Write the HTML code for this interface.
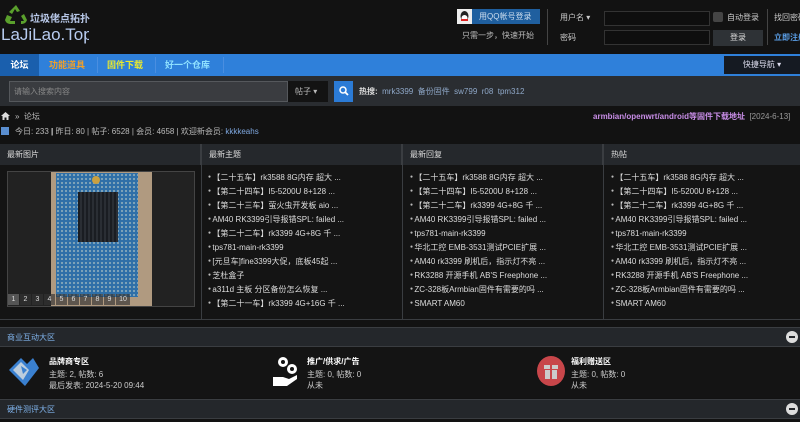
<!DOCTYPE html>
<html><head><meta charset="utf-8">
<style>
*{margin:0;padding:0;box-sizing:border-box}
body{width:800px;height:422px;overflow:hidden;background:#121212;font-family:"Liberation Sans","Noto Sans CJK SC",sans-serif;font-size:8px;color:#ccc;position:relative}
.a{position:absolute}
.nav{top:54px;left:0;width:800px;height:22px;background:#2f80da}
.nav span{position:absolute;top:0;height:22px;line-height:22px;font-size:9px;font-weight:bold}
.sbar{top:76px;left:0;width:800px;height:30px;background:#2a2d31}
.th{background:#25282c;height:21px;line-height:21px;font-size:8px;color:#ddd;padding-left:7px;border-right:1px solid #3a3d41}
ul{list-style:none}
li{height:14px;line-height:14px;font-size:8px;color:#ddd;white-space:nowrap}
li:before{content:"● ";font-size:5px;color:#bbb;vertical-align:2px}
.col{position:absolute;top:144px;height:175px;border-right:1px solid #3a3d41}
.sec{left:0;width:800px;height:20px;background:#24272b;border-top:1px solid #3a3d41;border-bottom:1px solid #3a3d41;line-height:19px;color:#7fb2ea;font-size:8px;padding-left:7px}
.pg{display:inline-block;width:11px;height:11px;line-height:11px;text-align:center;font-size:7px;color:#ddd;background:#333a;margin-right:1px}
</style></head><body>
<svg class="a" style="left:4px;top:4px" width="24" height="22" viewBox="0 0 24 22"><g fill="#5aa02c"><path d="M12 1l4 6-3 1-2-3-3 5-3-2z"/><path d="M20 10l3 6c-1 3-3 4-6 4l0-3h3l-3-5z"/><path d="M3 11l-2 5c1 3 3 4 6 4h4v-3H6l2-4z"/></g></svg>
<div class="a" style="left:30px;top:10px;font-size:10px;font-weight:bold;color:#b8c8e8">垃圾佬点拓扑</div>
<div class="a" style="left:1px;top:25px;font-size:17px;color:#b8ccf0;width:88px;overflow:hidden;white-space:nowrap">LaJiLao.Top</div>
<div class="a" style="left:457px;top:9px;width:83px;height:15px;background:#1f5f9f"><div class="a" style="left:0;top:0;width:15px;height:15px;background:#eee"></div><svg class="a" style="left:2px;top:1px" width="11" height="13"><ellipse cx="5.5" cy="6" rx="4" ry="5" fill="#222"/><ellipse cx="5.5" cy="8" rx="3" ry="3" fill="#fff"/><rect x="2" y="9" width="7" height="2" fill="#d22"/></svg><span class="a" style="left:22px;top:2px;font-size:8px;color:#cde">用QQ帐号登录</span></div>
<div class="a" style="left:462px;top:30px;font-size:8px;color:#bbb">只需一步，快速开始</div>
<div class="a" style="left:547px;top:9px;width:1px;height:36px;background:#444"></div>
<div class="a" style="left:560px;top:12px;font-size:8px;color:#ccc">用户名 ▾</div>
<div class="a" style="left:560px;top:32px;font-size:8px;color:#ccc">密码</div>
<div class="a" style="left:604px;top:11px;width:106px;height:15px;border:1px solid #333;background:#0e0e0e"></div>
<div class="a" style="left:604px;top:30px;width:106px;height:15px;border:1px solid #333;background:#0e0e0e"></div>
<div class="a" style="left:713px;top:12px;width:10px;height:10px;background:#444;border-radius:2px"></div>
<div class="a" style="left:727px;top:12px;font-size:8px;color:#ccc">自动登录</div>
<div class="a" style="left:713px;top:30px;width:50px;height:16px;background:#2e3236;text-align:center;line-height:16px;color:#ddd;font-size:8px">登录</div>
<div class="a" style="left:767px;top:9px;width:1px;height:36px;background:#444"></div>
<div class="a" style="left:774px;top:12px;font-size:8px;color:#ccc;white-space:nowrap">找回密码</div>
<div class="a" style="left:774px;top:32px;font-size:8px;color:#5a9ee6;white-space:nowrap;font-weight:bold">立即注册</div>
<div class="a nav">
<span style="left:0;width:39px;background:#1a5fad;color:#fff;text-align:center">论坛</span>
<span style="left:49px;color:#f0a02a">功能道具</span>
<span style="left:107px;color:#e8e830">固件下载</span>
<span style="left:165px;color:#8fe0ff">好一个仓库</span>
<div class="a" style="left:97px;top:3px;width:1px;height:16px;background:#4a8ee0"></div>
<div class="a" style="left:155px;top:3px;width:1px;height:16px;background:#4a8ee0"></div>
<div class="a" style="left:223px;top:3px;width:1px;height:16px;background:#4a8ee0"></div>
<div class="a" style="left:724px;top:2px;width:76px;height:18px;background:#151a22;color:#dde;text-align:center;line-height:18px;font-size:8px">快捷导航 ▾</div>
</div>
<div class="a sbar">
<div class="a" style="left:9px;top:5px;width:279px;height:21px;background:#3a3c40;border:1px solid #55585c;color:#888;line-height:19px;padding-left:4px;font-size:8px">请输入搜索内容</div>
<div class="a" style="left:288px;top:5px;width:40px;height:21px;background:#131313;color:#bbb;line-height:21px;padding-left:7px;font-size:8px">帖子 ▾</div>
<div class="a" style="left:334px;top:5px;width:19px;height:21px;background:#2b7bd6"><svg class="a" style="left:5px;top:5px" width="10" height="10"><circle cx="4" cy="4" r="3" stroke="#fff" stroke-width="1.5" fill="none"/><path d="M6 6l3 3" stroke="#fff" stroke-width="1.8"/></svg></div>
<div class="a" style="left:359px;top:10px;font-size:8px;color:#ddd;white-space:nowrap"><b>热搜:</b> <span style="color:#8fa8c8">&nbsp;mrk3399 &nbsp;备份固件 &nbsp;sw799 &nbsp;r08 &nbsp;tpm312</span></div>
</div>
<svg class="a" style="left:1px;top:112px" width="9" height="8"><path d="M0 4L4.5 0 9 4H7.5V8H5.5V5.5h-2V8h-2V4z" fill="#ddd"/></svg>
<div class="a" style="left:15px;top:111px;font-size:8px;color:#bbb">» &nbsp;论坛</div>
<div class="a" style="left:593px;top:111px;font-size:8px;color:#c98ee8;white-space:nowrap;font-weight:bold">armbian/openwrt/android等固件下载地址 <span style="color:#999;font-weight:normal">&nbsp;[2024-6-13]</span></div>
<div class="a" style="left:1px;top:127px;width:8px;height:8px;background:#5a8ed0"></div>
<div class="a" style="left:15px;top:126px;font-size:8px;color:#bbb;white-space:nowrap">今日: 233 <b style="color:#ddd">|</b> 昨日: 80 | 帖子: 6528 | 会员: 4658 | 欢迎新会员: <span style="color:#7fa8e0">kkkkeahs</span></div>
<div class="a" style="left:0;top:144px;width:800px;height:176px;background:#141414;border-top:1px solid #3a3d41;border-bottom:1px solid #3a3d41"></div>
<div class="col" style="left:0;width:202px"><div class="th">最新图片</div>
<div class="a" style="left:7px;top:27px;width:188px;height:136px;background:#222;border:1px solid #444;overflow:hidden">
<div class="a" style="left:43px;top:0;width:101px;height:136px;background:#b09a80"></div>
<div class="a" style="left:48px;top:1px;width:82px;height:124px;background:#2f6fa8"></div>
<div class="a" style="left:48px;top:1px;width:82px;height:124px;background:radial-gradient(#8ab 0.8px,transparent 1.3px) 0 0/4px 4px"></div>
<div class="a" style="left:70px;top:20px;width:40px;height:50px;background:repeating-linear-gradient(90deg,#1a1d22 0 2px,#2a2e34 2px 4px)"></div>
<div class="a" style="left:84px;top:4px;width:8px;height:8px;border-radius:50%;background:#c9a040"></div>
<div class="a" style="left:0;top:122px;white-space:nowrap"><span class="pg" style="background:#555">1</span><span class="pg">2</span><span class="pg">3</span><span class="pg">4</span><span class="pg">5</span><span class="pg">6</span><span class="pg">7</span><span class="pg">8</span><span class="pg">9</span><span class="pg" style="width:14px">10</span></div>
</div></div>
<div class="col" style="left:202px;width:201px"><div class="th">最新主题</div><ul style="padding:5px 0 0 6px">
<li>【二十五车】rk3588 8G内存 超大 ...</li><li>【第二十四车】I5-5200U 8+128 ...</li><li>【第二十三车】萤火虫开发板 aio ...</li><li>AM40 RK3399引导报错SPL: failed ...</li><li>【第二十二车】rk3399 4G+8G 千 ...</li><li>tps781-main-rk3399</li><li>[元旦车]fine3399大促，底板45起 ...</li><li>芝杜盒子</li><li>a311d 主板 分区备份怎么恢复 ...</li><li>【第二十一车】rk3399 4G+16G 千 ...</li></ul></div>
<div class="col" style="left:403px;width:201px"><div class="th">最新回复</div><ul style="padding:5px 0 0 7px">
<li>【二十五车】rk3588 8G内存 超大 ...</li><li>【第二十四车】I5-5200U 8+128 ...</li><li>【第二十二车】rk3399 4G+8G 千 ...</li><li>AM40 RK3399引导报错SPL: failed ...</li><li>tps781-main-rk3399</li><li>华北工控 EMB-3531测试PCIE扩展 ...</li><li>AM40 rk3399 刷机后，指示灯不亮 ...</li><li>RK3288 开源手机 AB'S Freephone ...</li><li>ZC-328板Armbian固件有需要的吗 ...</li><li>SMART AM60</li></ul></div>
<div class="col" style="left:604px;width:196px;border-right:none"><div class="th" style="border-right:none">热帖</div><ul style="padding:5px 0 0 7px">
<li>【二十五车】rk3588 8G内存 超大 ...</li><li>【第二十四车】I5-5200U 8+128 ...</li><li>【第二十二车】rk3399 4G+8G 千 ...</li><li>AM40 RK3399引导报错SPL: failed ...</li><li>tps781-main-rk3399</li><li>华北工控 EMB-3531测试PCIE扩展 ...</li><li>AM40 rk3399 刷机后，指示灯不亮 ...</li><li>RK3288 开源手机 AB'S Freephone ...</li><li>ZC-328板Armbian固件有需要的吗 ...</li><li>SMART AM60</li></ul></div>
<div class="a sec" style="top:327px">商业互动大区</div>
<div class="a" style="left:786px;top:331px;width:12px;height:12px;border-radius:50%;background:#ddd"><div class="a" style="left:3px;top:5px;width:6px;height:2px;background:#24272b"></div></div>
<div class="a" style="left:0;top:347px;width:800px;height:51px;background:#141414"></div>
<svg class="a" style="left:7px;top:354px" width="34" height="36" viewBox="0 0 34 36"><path d="M2 16L14 4l6 6 6-6 6 10-14 18z" fill="#3a80d0"/><path d="M6 16l8-8 8 8-6 10z" fill="#bcd"/><path d="M14 12l6 4-4 4z" fill="#3a80d0"/></svg>
<div class="a" style="left:49px;top:356px;font-size:8px;color:#fff;font-weight:bold">品牌商专区</div>
<div class="a" style="left:49px;top:369px;font-size:8px;color:#ccc">主题: 2, 帖数: 6</div>
<div class="a" style="left:49px;top:380px;font-size:8px;color:#ccc">最后发表: 2024-5-20 09:44</div>
<svg class="a" style="left:273px;top:355px" width="26" height="32" viewBox="0 0 26 32"><circle cx="10" cy="7" r="5" fill="#fff"/><circle cx="19" cy="14" r="5" fill="#fff"/><circle cx="10" cy="7" r="2" fill="#141414"/><circle cx="19" cy="14" r="2" fill="#141414"/><path d="M0 22h10l6 2 8-4v4l-10 7H0z" fill="#fff"/></svg>
<div class="a" style="left:307px;top:356px;font-size:8px;color:#fff;font-weight:bold">推广/供求/广告</div>
<div class="a" style="left:307px;top:369px;font-size:8px;color:#ccc">主题: 0, 帖数: 0</div>
<div class="a" style="left:307px;top:380px;font-size:8px;color:#ccc">从未</div>
<svg class="a" style="left:537px;top:356px" width="28" height="30"><ellipse cx="14" cy="15" rx="14" ry="15" fill="#c8464a"/><rect x="7" y="9" width="14" height="4" fill="#ccc"/><rect x="8" y="14" width="12" height="9" fill="#ccc"/><rect x="13" y="9" width="2" height="14" fill="#c8464a"/></svg>
<div class="a" style="left:571px;top:356px;font-size:8px;color:#fff;font-weight:bold">福利赠送区</div>
<div class="a" style="left:571px;top:369px;font-size:8px;color:#ccc">主题: 0, 帖数: 0</div>
<div class="a" style="left:571px;top:380px;font-size:8px;color:#ccc">从未</div>
<div class="a sec" style="top:399px">硬件测评大区</div>
<div class="a" style="left:786px;top:403px;width:12px;height:12px;border-radius:50%;background:#ddd"><div class="a" style="left:3px;top:5px;width:6px;height:2px;background:#24272b"></div></div>
</body></html>
